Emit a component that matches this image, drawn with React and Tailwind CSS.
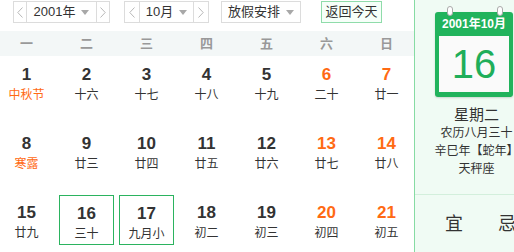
import React from 'react';

const weekdays = ['一', '二', '三', '四', '五', '六', '日'];

const rows = [
  [
    { d: 1, l: '中秋节', festival: true },
    { d: 2, l: '十六' },
    { d: 3, l: '十七' },
    { d: 4, l: '十八' },
    { d: 5, l: '十九' },
    { d: 6, l: '二十' },
    { d: 7, l: '廿一' },
  ],
  [
    { d: 8, l: '寒露', festival: true },
    { d: 9, l: '廿三' },
    { d: 10, l: '廿四' },
    { d: 11, l: '廿五' },
    { d: 12, l: '廿六' },
    { d: 13, l: '廿七' },
    { d: 14, l: '廿八' },
  ],
  [
    { d: 15, l: '廿九' },
    { d: 16, l: '三十', boxed: true },
    { d: 17, l: '九月小', boxed: true },
    { d: 18, l: '初二' },
    { d: 19, l: '初三' },
    { d: 20, l: '初四' },
    { d: 21, l: '初五' },
  ],
];

const Chevron = ({ dir }) => (
  <svg width="6" height="11" viewBox="0 0 6 11" fill="none">
    <polyline
      points={dir === 'left' ? '5.5,0.5 0.8,5.5 5.5,10.5' : '0.5,0.5 5.2,5.5 0.5,10.5'}
      stroke="#b8b8b8"
      strokeWidth="1"
    />
  </svg>
);

const Caret = () => (
  <svg width="8" height="5" viewBox="0 0 8 5" className="ml-[6px]">
    <polygon points="0,0 8,0 4,5" fill="#a8a8a8" />
  </svg>
);

const Stepper = ({ label, side, width }) => (
  <div className="flex h-[22px] border border-[#dcdcdc] bg-white">
    <div className={`flex items-center justify-center border-r border-[#dcdcdc] ${side}`}>
      <Chevron dir="left" />
    </div>
    <div className={`flex items-center justify-center ${width}`}>
      <span>{label}</span>
      <Caret />
    </div>
    <div className={`flex items-center justify-center border-l border-[#dcdcdc] ${side}`}>
      <Chevron dir="right" />
    </div>
  </div>
);

const DayCell = ({ cell, weekend }) => {
  const numColor = weekend ? 'text-[#ff6a13]' : 'text-[#333]';
  const lunarColor = cell.festival ? 'text-[#ff6a13]' : 'text-[#333]';
  return (
    <div
      className={`flex h-[50px] flex-col items-center pt-[8px] ${
        cell.boxed ? 'border border-[#2bb35f] pt-[7px]' : ''
      }`}
    >
      <div className={`text-[17px] font-bold leading-[20px] ${numColor}`}>{cell.d}</div>
      <div className={`text-[12px] leading-[20px] ${lunarColor}`}>{cell.l}</div>
    </div>
  );
};

export default function App() {
  return (
    <div
      className="flex h-[252px] w-[514px] overflow-hidden bg-white text-[#333]"
      style={{ fontFamily: '"Liberation Sans", Arial, "Noto Sans CJK SC", sans-serif' }}
    >
      <div className="w-[414px] shrink-0">
        <div className="flex h-[31px] items-start pt-[1px] text-[13px]">
          <div className="ml-[13px]">
            <Stepper label="2001年" side="w-[13px]" width="w-[69px]" />
          </div>
          <div className="ml-[14px]">
            <Stepper label="10月" side="w-[15px]" width="w-[53px]" />
          </div>
          <div className="ml-[12px] flex h-[22px] w-[80px] items-center justify-center border border-[#dcdcdc]">
            <span>放假安排</span>
            <Caret />
          </div>
          <div className="ml-[20px] flex h-[22px] w-[61px] items-center justify-center border border-[#8fdcaa] bg-[#f6fff9]">
            返回今天
          </div>
        </div>

        <div className="-ml-px grid h-[25px] grid-cols-[repeat(7,55px)] gap-x-[5px] bg-[#f3f7f7]">
          {weekdays.map((w) => (
            <div key={w} className="flex items-center justify-center text-[13px] font-bold text-[#999]">
              {w}
            </div>
          ))}
        </div>

        <div className="-ml-px grid grid-cols-[repeat(7,55px)] gap-x-[5px] gap-y-[19px] pt-[1px]">
          {rows.flat().map((cell, i) => (
            <DayCell key={cell.d} cell={cell} weekend={i % 7 >= 5} />
          ))}
        </div>
      </div>

      <div className="w-[124px] shrink-0 border-l border-[#86dba3] bg-[#f0fbf4]">
        <div className="relative ml-[20px] mt-[12px] w-[78px] rounded-[3px] bg-[#21b35c] px-[4px] pb-[5px] shadow-[0_1px_2px_rgba(0,0,0,0.15)]">
          <div className="absolute left-[12px] top-[-6px] h-[10px] w-[6px] rounded-full border border-[#aaa] bg-white" />
          <div className="absolute right-[10px] top-[-6px] h-[10px] w-[6px] rounded-full border border-[#aaa] bg-white" />
          <div className="flex h-[24px] items-center justify-center text-[12px] font-bold text-white">
            2001年10月
          </div>
          <div className="flex h-[56px] items-center justify-center bg-[#fafafa] text-[40px] leading-none text-[#1fae5a]">
            16
          </div>
        </div>
        <div className="mt-[9px] flex flex-col items-center whitespace-nowrap">
          <div className="text-[15px] leading-[18px]">星期二</div>
          <div className="text-[12px] leading-[18px]">农历八月三十</div>
          <div className="text-[12px] leading-[18px]">辛巳年【蛇年】</div>
          <div className="text-[12px] leading-[18px]">天秤座</div>
        </div>
        <div className="mt-[16px] border-t border-[#d3efdc]" />
        <div className="flex gap-[35px] pl-[30px] pt-[19px] text-[18px] leading-[20px]">
          <span>宜</span>
          <span>忌</span>
        </div>
      </div>
    </div>
  );
}
